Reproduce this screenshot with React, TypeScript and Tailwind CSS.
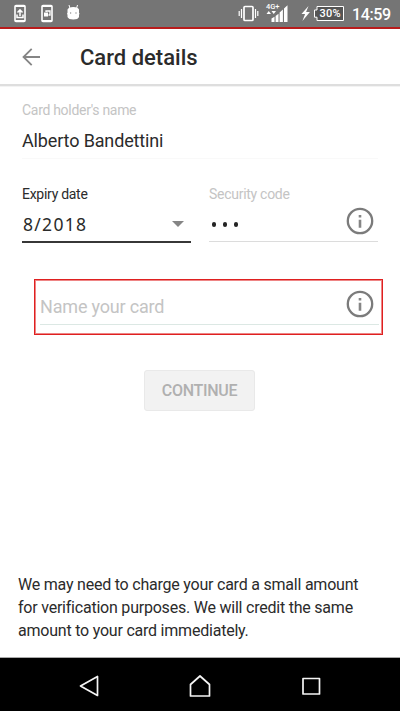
import React from "react";

function InfoIcon() {
  return (
    <svg width="28" height="28" viewBox="0 0 28 28" className="shrink-0">
      <circle cx="14" cy="14" r="12.2" fill="none" stroke="#7b7b7b" strokeWidth="2.3" />
      <path d="M14 8v2.4M14 12.8v8" stroke="#858585" strokeWidth="2.6" />
    </svg>
  );
}

function StatusBar() {
  return (
    <div className="flex h-[27px] shrink-0 items-start bg-[#757575] text-white">
      <svg width="80" height="27" viewBox="0 0 80 27" fill="none" stroke="#fff">
        <rect x="15" y="5.5" width="10" height="16" rx="1" strokeWidth="1.6" />
        <path d="M15 6h10M15 21h10" strokeWidth="2" />
        <path d="M20 16V10M17.500 12.400l2.500-2.600 2.500 2.600M17 14.500v3h6v-3" strokeWidth="1.5" />
        <rect x="42" y="5.500" width="10" height="16" rx="1" strokeWidth="1.600" />
        <path d="M42 6h10M42 21h10" strokeWidth="2" />
        <path d="M46 12v-1h4v4h-1.500" strokeWidth="1.300" />
        <rect x="44" y="12.500" width="4" height="4" fill="#fff" stroke="none" />
        <path d="M69 5l1 3.500M77.500 5l-1 3.500" strokeWidth="1" />
        <path d="M67.500 9.500Q68.500 7 73.300 7T79 9.500v3.200q1 .8 0 2V17q-1 2.500-5.700 2.500T67.500 17v-2.300q-1-1.200 0-2z" fill="#fff" stroke="none" />
        <path d="M70 13h1.200M75.400 13h1.200" stroke="#757575" strokeWidth="1.200" />
      </svg>
      <div className="flex-1" />
      <svg width="170" height="27" viewBox="230 0 170 27" fill="none" stroke="#fff">
        <rect x="244" y="6.500" width="9" height="14" rx="1" strokeWidth="1.700" />
        <path d="M241.500 9v9M255.500 9v9M239.200 11v5M257.800 11v5" strokeWidth="1.200" />
        <text x="266" y="9" fill="#fff" stroke="none" className="font-[Roboto] text-[8px] font-medium" textLength="13.5" lengthAdjust="spacingAndGlyphs">4G+</text>
        <path d="M266.500 14h4.500l-2.250-3zM271.500 11h4.500l-2.250 3z" fill="#fff" stroke="none" />
        <path d="M271.500 22v-3.500l3-1.800V22zM275.600 22v-6l2.900-2.300V22zM279.600 22v-9.500l3.300-3V22zM284 22V8.600l3.500-3.400V22z" fill="#fff" stroke="none" />
        <path d="M308.500 6l-7 8h3.600l-2.700 7 7.500-9h-3.800z" fill="#fff" stroke="none" />
        <path d="M317 6.500h26.500v14H317v-3.300h-2.500V10h2.500z" fill="#555" strokeWidth="1" />
        <text x="319.500" y="17.300" fill="#fff" stroke="none" className="font-[Roboto] text-[11px] font-medium" textLength="21">30%</text>
        <text x="352" y="19.500" fill="#fff" stroke="none" className="font-[Roboto] text-[16px] font-medium" textLength="39">14:59</text>
      </svg>
    </div>
  );
}

export default function App() {
  return (
    <div className="flex h-[711px] w-[400px] flex-col overflow-hidden bg-white font-[Roboto,sans-serif] text-[#2b2b2b]">
      <StatusBar />
      <header className="flex h-[59px] shrink-0 items-center border-t-2 border-b-2 border-t-[#b81c1c] border-b-[#dedede] pl-[22px]">
        <svg width="20" height="20" viewBox="0 0 20 20" fill="none" stroke="#858585" strokeWidth="1.8">
          <path d="M18 10H2M9.700 1.800L1.500 10l8.200 8.200" />
        </svg>
        <h1 className="mt-[2px] ml-[38px] text-[22px] leading-[26px] font-medium whitespace-nowrap">Card details</h1>
      </header>
      <div className="h-px shrink-0 bg-[#f3f3f3]" />
      <main className="flex flex-1 flex-col">
        <section className="mx-[22px] h-[72px] border-b border-[#f9f9f9] pt-[15px]">
          <div className="text-[14px] leading-4 tracking-[-0.3px] text-[#c4c4c4]">Card holder&apos;s name</div>
          <div className="mt-[11px] text-[18px] leading-6 tracking-[-0.14px]">Alberto Bandettini</div>
        </section>
        <section className="mt-[25px] flex h-[59px] gap-[18px] pr-[22px] pl-[22px]">
          <div className="h-[59px] w-[169px] border-b-2 border-[#373737]">
            <div className="mt-[2px] text-[14px] leading-4 tracking-[-0.28px]">Expiry date</div>
            <div className="mt-[10px] flex h-6 items-center justify-between pr-[7px]">
              <span className="ml-px font-['Noto_Sans'] text-[17.500px] leading-6 tracking-[1.3px]">8/2018</span>
              <svg width="12" height="6" viewBox="0 0 12 6"><path d="M0 0h12L6 6z" fill="#858585" /></svg>
            </div>
          </div>
          <div className="h-[58px] flex-1 border-b border-[#dcdcdc]">
            <div className="mt-[2px] text-[14px] leading-4 tracking-[-0.28px] text-[#c4c4c4]">Security code</div>
            <div className="mt-[5px] flex h-7 items-center justify-between pr-[4px]">
              <div className="mt-[6px] ml-[3px] flex gap-[7px]">
                <i className="h-[5px] w-[4px] rounded-full bg-[#242424]" />
                <i className="h-[5px] w-[4px] rounded-full bg-[#242424]" />
                <i className="h-[5px] w-[4px] rounded-full bg-[#242424]" />
              </div>
              <InfoIcon />
            </div>
          </div>
        </section>
        <section className="mt-[36px] ml-[34px] h-[56px] w-[349px] border border-[#df2020] pt-[10px] pr-[3px] pl-[5px] shadow-[inset_0_0_0_1px_#ee8585]">
          <div className="flex h-[35px] items-start justify-between border-b border-[#dce8e4] pr-[5px]">
            <span className="mt-[5px] text-[18px] leading-6 tracking-[-0.18px] text-[#c4c4c4]">Name your card</span>
            <InfoIcon />
          </div>
        </section>
        <button className="mt-[35px] mr-[1px] h-[41px] w-[111px] self-center rounded-[3px] border border-[#e9e9e9] bg-[#f2f2f2] text-[16px] font-medium tracking-[-0.3px] text-[#b0b0b0]">CONTINUE</button>
        <p className="mt-[162px] ml-[18px] text-[16px] leading-[23px] tracking-[-0.22px] whitespace-nowrap">
          We may need to charge your card a small amount<br />
          for verification purposes. We will credit the same<br />
          amount to your card immediately.
        </p>
      </main>
      <nav className="flex h-[54px] shrink-0 border-t border-[#aaa] bg-black">
        <svg width="400" height="53" viewBox="0 658 400 53" fill="none" stroke="#f5f5f5" strokeWidth="1.700" strokeLinejoin="round">
          <path d="M97.500 676.500v19L80.500 686zM200 676l-9.500 8.500v11.500h19v-11.500zM303 678.500h16.500v15.500H303z" />
        </svg>
      </nav>
    </div>
  );
}
